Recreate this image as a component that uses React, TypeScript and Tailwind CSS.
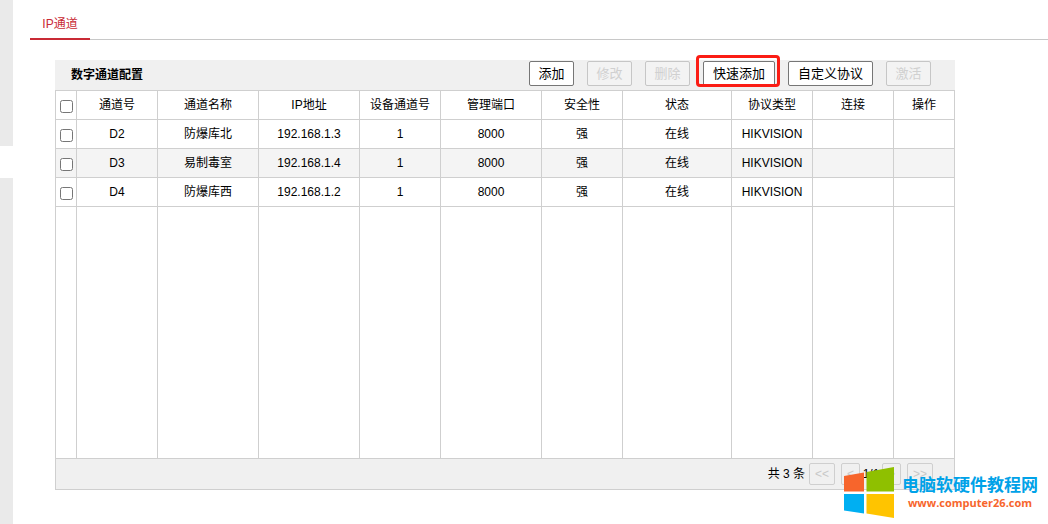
import { useState } from 'react'
import clsx from 'clsx'

interface Channel {
  id: string
  name: string
  ip: string
  channelNo: number
  port: number
  security: string
  status: string
  protocol: string
}

const channels: Channel[] = [
  { id: 'D2', name: '防爆库北', ip: '192.168.1.3', channelNo: 1, port: 8000, security: '强', status: '在线', protocol: 'HIKVISION' },
  { id: 'D3', name: '易制毒室', ip: '192.168.1.4', channelNo: 1, port: 8000, security: '强', status: '在线', protocol: 'HIKVISION' },
  { id: 'D4', name: '防爆库西', ip: '192.168.1.2', channelNo: 1, port: 8000, security: '强', status: '在线', protocol: 'HIKVISION' },
]

const columns = [
  { label: '通道号', width: 'w-[81px]' },
  { label: '通道名称', width: 'w-[101px]' },
  { label: 'IP地址', width: 'w-[101px]' },
  { label: '设备通道号', width: 'w-[81px]' },
  { label: '管理端口', width: 'w-[101px]' },
  { label: '安全性', width: 'w-[81px]' },
  { label: '状态', width: 'w-auto' },
  { label: '协议类型', width: 'w-[81px]' },
  { label: '连接', width: 'w-[81px]' },
  { label: '操作', width: 'w-[61px]' },
]

const actions = [
  { label: '添加', width: 'w-[45px]' },
  { label: '修改', width: 'w-[45px]', disabled: true },
  { label: '删除', width: 'w-[45px]', disabled: true },
  { label: '快速添加', width: 'w-[72px]', highlighted: true },
  { label: '自定义协议', width: 'w-[85px]' },
  { label: '激活', width: 'w-[45px]', disabled: true },
]

const cell = 'h-[29px] border border-[#cfcfcf] p-0 text-center font-normal'
const checkCell = 'border border-[#cfcfcf] p-0 pt-[3px]'

function Toolbar() {
  return (
    <div className="flex gap-[13px]">
      {actions.map((action) => (
        <div key={action.label} className="relative">
          <button
            type="button"
            disabled={action.disabled}
            className={clsx(
              'block h-[25px] rounded-[2px] border text-[13px] leading-6',
              action.width,
              action.disabled ? 'border-[#c6c6c6] bg-[#f3f3f3] text-[#d0d0d0]' : 'border-[#767676] bg-white text-black'
            )}
          >
            {action.label}
          </button>
          {action.highlighted && (
            <span className="pointer-events-none absolute -top-1.5 -right-[5px] -bottom-px -left-[7px] rounded-[4px] border-3 border-[#fb1c14]" />
          )}
        </div>
      ))}
    </div>
  )
}

function PageButton({ label, title, width }: { label: string; title: string; width: string }) {
  return (
    <button
      type="button"
      disabled
      aria-label={title}
      className={clsx('h-[22px] rounded-[2px] border border-[#cfcfcf] text-xs leading-5 text-[#c8c8c8]', width)}
    >
      {label}
    </button>
  )
}

function Watermark() {
  return (
    <div className="absolute right-2.5 bottom-[5px] flex items-start gap-2">
      <svg width="50" height="52" viewBox="0 0 50 52" aria-hidden="true">
        <path d="M0 9 20 5.5V24.5H0Z" fill="#f7652c" />
        <path d="M22.5 5 50 0V24.5H22.5Z" fill="#8fc000" />
        <path d="M0 27H20V46.5L0 43.5Z" fill="#00aff2" />
        <path d="M22.5 27H50V51L22.5 46.5Z" fill="#ffc400" />
      </svg>
      <div className="flex flex-col items-center pt-2 font-bold">
        <span className="font-['Noto_Sans_CJK_SC',sans-serif] text-[17px] leading-[18px] text-[#00a2e8]">电脑软硬件教程网</span>
        <a href="#home" className="font-['Open_Sans',sans-serif] text-[11px] leading-5 text-[#f7652c]">
          www.computer26.com
        </a>
      </div>
    </div>
  )
}

export default function App() {
  const [selected, setSelected] = useState<string[]>([])

  const toggle = (id: string) => {
    setSelected((prev) => (prev.includes(id) ? prev.filter((item) => item !== id) : [...prev, id]))
  }

  const toggleAll = () => {
    setSelected((prev) => (prev.length === channels.length ? [] : channels.map((c) => c.id)))
  }

  return (
    <div className="relative flex min-h-screen bg-white font-['Liberation_Sans','Noto_Sans_CJK_SC',sans-serif] text-xs text-black">
      <aside className="flex w-[13px] shrink-0 flex-col gap-8">
        <div className="h-[146px] bg-[#eaeaea]" />
        <div className="grow bg-[#eaeaea]" />
      </aside>

      <main className="min-w-0 grow pl-[17px]">
        <nav className="flex border-b border-[#c8c8c8] pt-2.5">
          <a href="#ip" className="-mb-px w-15 border-b-2 border-[#c92a35] text-center leading-7 text-[#c92a35]">
            IP通道
          </a>
        </nav>

        <section className="mt-5 ml-[25px] max-w-[900px]">
          <header className="flex h-[30px] items-start justify-between bg-[#f0f0f0] pt-px pr-6 pl-4">
            <h2 className="leading-7 font-bold">数字通道配置</h2>
            <Toolbar />
          </header>

          <table className="w-full table-fixed border-collapse">
            <colgroup>
              <col className="w-[21px]" />
              {columns.map((column) => (
                <col key={column.label} className={column.width} />
              ))}
            </colgroup>
            <thead>
              <tr>
                <th className={checkCell}>
                  <input
                    type="checkbox"
                    aria-label="全选"
                    className="mx-auto block size-[13px]"
                    checked={selected.length === channels.length}
                    onChange={toggleAll}
                  />
                </th>
                {columns.map((column) => (
                  <th key={column.label} className={cell}>{column.label}</th>
                ))}
              </tr>
            </thead>
            <tbody>
              {channels.map((channel) => (
                <tr key={channel.id} className="even:bg-[#f4f4f4]">
                  <td className={checkCell}>
                    <input
                      type="checkbox"
                      aria-label={channel.id}
                      className="mx-auto block size-[13px]"
                      checked={selected.includes(channel.id)}
                      onChange={() => toggle(channel.id)}
                    />
                  </td>
                  <td className={cell}>{channel.id}</td>
                  <td className={cell}>{channel.name}</td>
                  <td className={cell}>{channel.ip}</td>
                  <td className={cell}>{channel.channelNo}</td>
                  <td className={cell}>{channel.port}</td>
                  <td className={cell}>{channel.security}</td>
                  <td className={cell}>{channel.status}</td>
                  <td className={cell}>{channel.protocol}</td>
                  <td className={cell} />
                  <td className={cell} />
                </tr>
              ))}
              {/* empty area below the last channel */}
              <tr className="h-[252px] bg-white">
                <td className="border border-[#cfcfcf]" />
                {columns.map((column) => (
                  <td key={column.label} className="border border-[#cfcfcf]" />
                ))}
              </tr>
            </tbody>
          </table>

          <footer className="flex h-[31px] items-center justify-end border-x border-b border-[#cfcfcf] bg-[#f0f0f0] pr-[21px]">
            <span className="mr-1">共 3 条</span>
            <PageButton label="<<" title="首页" width="w-[26px]" />
            <span className="w-1.5" />
            <PageButton label="<" title="上一页" width="w-[19px]" />
            <span className="w-[22px] text-center">1/1</span>
            <PageButton label=">" title="下一页" width="w-[19px]" />
            <span className="w-1.5" />
            <PageButton label=">>" title="末页" width="w-[26px]" />
          </footer>
        </section>
      </main>

      <Watermark />
    </div>
  )
}
